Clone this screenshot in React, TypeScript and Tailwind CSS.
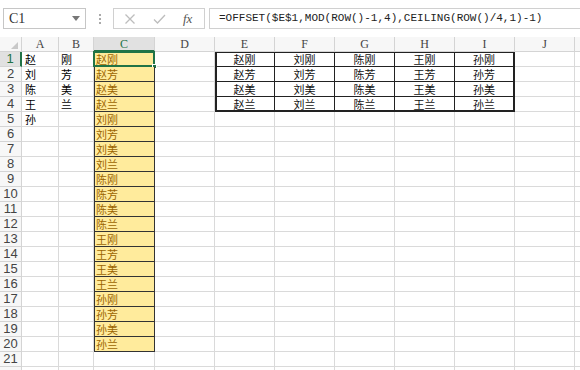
import React from "react";

const surnames = ["赵", "刘", "陈", "王", "孙"];
const names = ["刚", "芳", "美", "兰"];
const cols = ["A", "B", "C", "D", "E", "F", "G", "H", "I", "J", ""];

const cjk = "font-['Noto_Sans_CJK_SC',sans-serif] text-[11px] leading-[14px] whitespace-nowrap";
const grid = "border-r border-b border-[#dadada]";

function Cell({ r, c }: { r: number; c: number }) {
  // column A / B: source lists
  if (c === 0) {
    return <div className={`${grid} h-[15px] pl-[3px] ${cjk}`}>{surnames[r] ?? ""}</div>;
  }
  if (c === 1) {
    return <div className={`${grid} h-[15px] pl-[2px] ${cjk}`}>{names[r] ?? ""}</div>;
  }
  // column C: formula output
  if (c === 2 && r < 20) {
    const txt = surnames[Math.floor(r / 4)] + names[r % 4];
    return (
      <div
        className={`relative h-[15px] pl-[2px] ${cjk} bg-[#ffeb9c] text-[#9c6500] border-r border-b border-[#333] shadow-[inset_1px_0_0_#333]`}
      >
        {txt}
        {r === 0 && (
          <>
            <div className="absolute -left-px -top-px -right-[1px] -bottom-[1px] border-2 border-[#217346]" />
            <div className="absolute -right-[3px] -bottom-[3px] w-[5px] h-[5px] bg-[#217346] border border-white" />
          </>
        )}
      </div>
    );
  }
  // E1:I4 table
  if (c >= 4 && c <= 8 && r < 4) {
    const txt = surnames[c - 4] + names[r];
    const left = c === 4;
    const right = c === 8;
    const bottom = r === 3;
    const top = r === 0;
    let shadow = "";
    if (left && top) shadow = "shadow-[inset_2px_0_0_#222,inset_0_1px_0_#222]";
    else if (left) shadow = "shadow-[inset_2px_0_0_#222]";
    else if (top) shadow = "shadow-[inset_0_1px_0_#222]";
    return (
      <div
        className={`h-[15px] text-center ${cjk} text-[#111] border-[#222] ${right ? "border-r-2" : "border-r"} ${bottom ? "border-b-2" : "border-b"} ${shadow}`}
      >
        {txt}
      </div>
    );
  }
  return <div className={`${grid} h-[15px]`} />;
}

export default function App() {
  const rows = Array.from({ length: 21 }, (_, i) => i);

  return (
    <div className="w-[580px] h-[370px] bg-white overflow-hidden relative">
      {/* formula bar */}
      <div className="h-[37px] flex items-start pt-[8px] pl-[3px]">
        <div className="w-[83px] h-[21px] border border-[#c6c6c6] flex items-center justify-between pl-[5px] pr-[5px]">
          <span className="font-['Liberation_Serif',serif] text-[14px] text-[#333]">C1</span>
          <svg width="8" height="5" viewBox="0 0 8 5">
            <path d="M0 0h8L4 5z" fill="#777" />
          </svg>
        </div>
        <div className="w-[27px] h-[21px] flex flex-col items-center justify-center gap-[2px]">
          <span className="w-[2px] h-[2px] bg-[#aaa]" />
          <span className="w-[2px] h-[2px] bg-[#aaa]" />
          <span className="w-[2px] h-[2px] bg-[#aaa]" />
        </div>
        <div className="w-[92px] h-[21px] border border-[#d0d0d0] flex items-center pl-[10px]">
          <svg width="12" height="12" viewBox="0 0 12 12">
            <path d="M1.5 1.5l9 9M10.5 1.5l-9 9" stroke="#bdbdbd" strokeWidth="1.3" />
          </svg>
          <svg width="13" height="12" viewBox="0 0 13 12" className="ml-[17px]">
            <path d="M1 6.5l3.5 3.5L12 2" stroke="#bdbdbd" strokeWidth="1.3" fill="none" />
          </svg>
          <span className="ml-[17px] font-['Liberation_Serif',serif] italic text-[13px] text-[#555]">fx</span>
        </div>
        <div className="flex-1 ml-[4px] h-[21px] border-l border-y border-[#d0d0d0] flex items-center pl-[9px]">
          <span className="font-['Liberation_Mono',monospace] text-[11px] text-[#222] whitespace-nowrap">
            =OFFSET($E$1,MOD(ROW()-1,4),CEILING(ROW()/4,1)-1)
          </span>
        </div>
      </div>

      {/* sheet */}
      <div className="grid grid-cols-[22px_37px_35px_61px_60px_60px_60px_60px_60px_60px_60px_60px] auto-rows-[15px]">
        {/* header row */}
        <div className="relative border-r border-b border-[#d4d4d4] bg-[#f7f7f7]">
          <svg width="7" height="7" viewBox="0 0 7 7" className="absolute right-[3px] bottom-[2px]">
            <path d="M7 0v7H0z" fill="#c8c8c8" />
          </svg>
        </div>
        {cols.map((c, i) => (
          <div
            key={i}
            className={`border-r border-[#d4d4d4] text-center text-[12px] leading-[14px] font-['Liberation_Serif',serif] ${
              i === 2 ? "bg-[#e1e1e1] text-[#217346] border-b-2 border-b-[#217346]" : "bg-[#f7f7f7] text-[#444] border-b"
            }`}
          >
            {c}
          </div>
        ))}

        {rows.map((r) => (
          <React.Fragment key={r}>
            <div
              className={`border-b border-[#d4d4d4] text-center text-[13px] leading-[14px] font-['Liberation_Sans',sans-serif] ${
                r === 0 ? "bg-[#e1e1e1] text-[#217346] border-r-2 border-r-[#217346]" : "bg-[#f7f7f7] text-[#444] border-r"
              }`}
            >
              {r + 1}
            </div>
            {cols.map((c, ci) => (
              <Cell key={ci} r={r} c={ci} />
            ))}
          </React.Fragment>
        ))}

        {/* partially visible row 22 */}
        <div className="border-r border-[#d4d4d4] bg-[#f7f7f7]" />
        {cols.map((_, ci) => (
          <div key={ci} className="border-r border-[#dadada]" />
        ))}
      </div>
    </div>
  );
}
